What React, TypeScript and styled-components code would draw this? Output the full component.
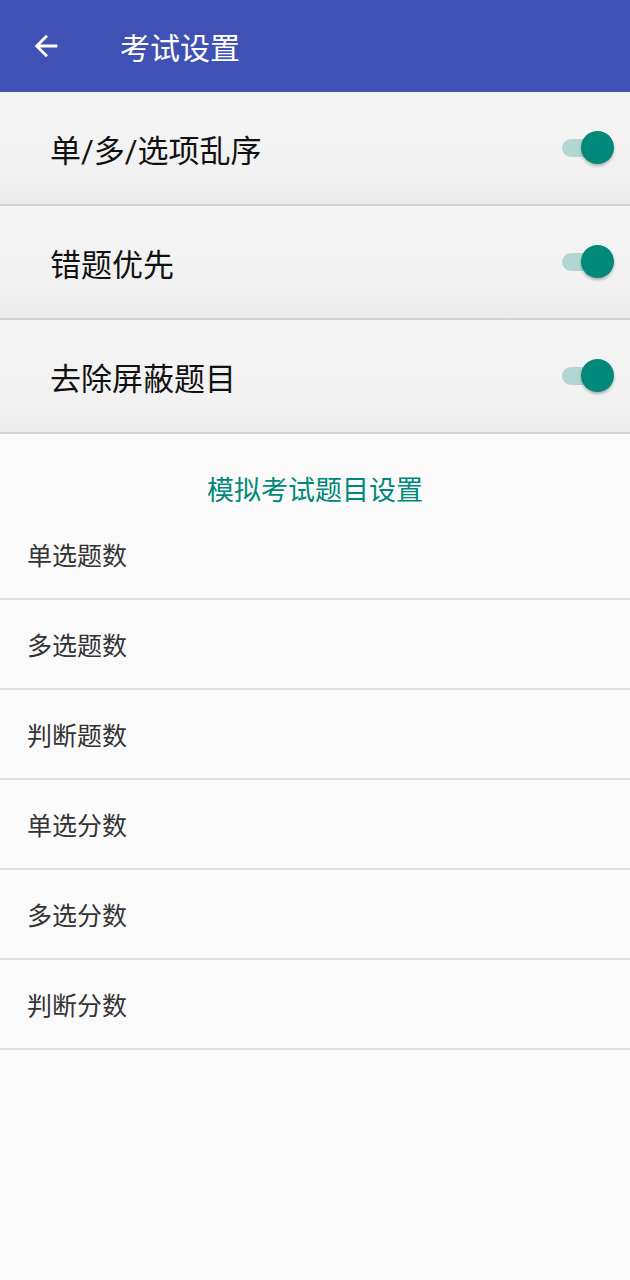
import React, { useState } from "react";
import styled, { createGlobalStyle } from "styled-components";

const GlobalStyle = createGlobalStyle`
  html, body {
    margin: 0;
    padding: 0;
    background: #fafafa;
    font-family: Roboto, "Noto Sans CJK SC", sans-serif;
  }
`;

const Page = styled.div`
  width: 630px;
  min-height: 1280px;
  background: #fafafa;
`;

const Toolbar = styled.header`
  height: 92px;
  background: #3f51b5;
  display: flex;
  align-items: center;
  padding-left: 28px;
  box-sizing: border-box;
`;

const BackButton = styled.button`
  width: 36px;
  height: 36px;
  border: none;
  background: transparent;
  padding: 0;
  display: flex;
  align-items: center;
  justify-content: center;
  cursor: pointer;
`;

const Title = styled.h1`
  margin: 0 0 0 56px;
  font-size: 30px;
  font-weight: 400;
  color: #ffffff;
`;

const SwitchRow = styled.div`
  height: 112px;
  display: flex;
  align-items: center;
  justify-content: space-between;
  padding: 0 16px 0 50px;
  background: linear-gradient(#f5f5f5 0%, #f1f1f1 75%, #ebebeb 100%);
  border-bottom: 2px solid #d3d3d3;
`;

const SwitchLabel = styled.span`
  font-size: 31px;
  color: #111;
`;

const Track = styled.button<{ $on: boolean }>`
  position: relative;
  width: 54px;
  height: 34px;
  border: none;
  background: transparent;
  padding: 0;
  cursor: pointer;

  &::before {
    content: "";
    position: absolute;
    left: 2px;
    right: 4px;
    top: 8px;
    height: 18px;
    border-radius: 9px;
    background: ${(p) => (p.$on ? "#b2d6d2" : "#c4c4c4")};
  }
`;

const Thumb = styled.span<{ $on: boolean }>`
  position: absolute;
  top: 0;
  left: ${(p) => (p.$on ? "21px" : "-2px")};
  width: 33px;
  height: 33px;
  border-radius: 50%;
  background: ${(p) => (p.$on ? "#00897b" : "#f1f1f1")};
  box-shadow: 0 2px 3px rgba(0, 0, 0, 0.28);
`;

const SectionTitle = styled.div`
  padding-top: 41px;
  height: 35px;
  text-align: center;
  font-size: 27px;
  color: #00897b;
  line-height: 32px;
`;

const ListRow = styled.div`
  height: 88px;
  display: flex;
  align-items: center;
  padding-left: 27px;
  border-bottom: 2px solid #e0e0e0;
  font-size: 25px;
  color: #333;
`;

const toggles = ["单/多/选项乱序", "错题优先", "去除屏蔽题目"];
const items = ["单选题数", "多选题数", "判断题数", "单选分数", "多选分数", "判断分数"];

const App = () => {
  const [state, setState] = useState([true, true, true]);

  const flip = (i: number) =>
    setState((s) => s.map((v, j) => (j === i ? !v : v)));

  return (
    <Page>
      <GlobalStyle />
      <Toolbar>
        <BackButton aria-label="back">
          <svg width="34" height="34" viewBox="0 0 24 24">
            <path
              d="M20 11H7.83l5.59-5.59L12 4l-8 8 8 8 1.41-1.41L7.83 13H20v-2z"
              fill="#fff"
            />
          </svg>
        </BackButton>
        <Title>考试设置</Title>
      </Toolbar>

      {toggles.map((t, i) => (
        <SwitchRow key={t}>
          <SwitchLabel>{t}</SwitchLabel>
          <Track $on={state[i]} onClick={() => flip(i)}>
            <Thumb $on={state[i]} />
          </Track>
        </SwitchRow>
      ))}

      <SectionTitle>模拟考试题目设置</SectionTitle>
      {items.map((t) => (
        <ListRow key={t}>{t}</ListRow>
      ))}
    </Page>
  );
};

export default App;
